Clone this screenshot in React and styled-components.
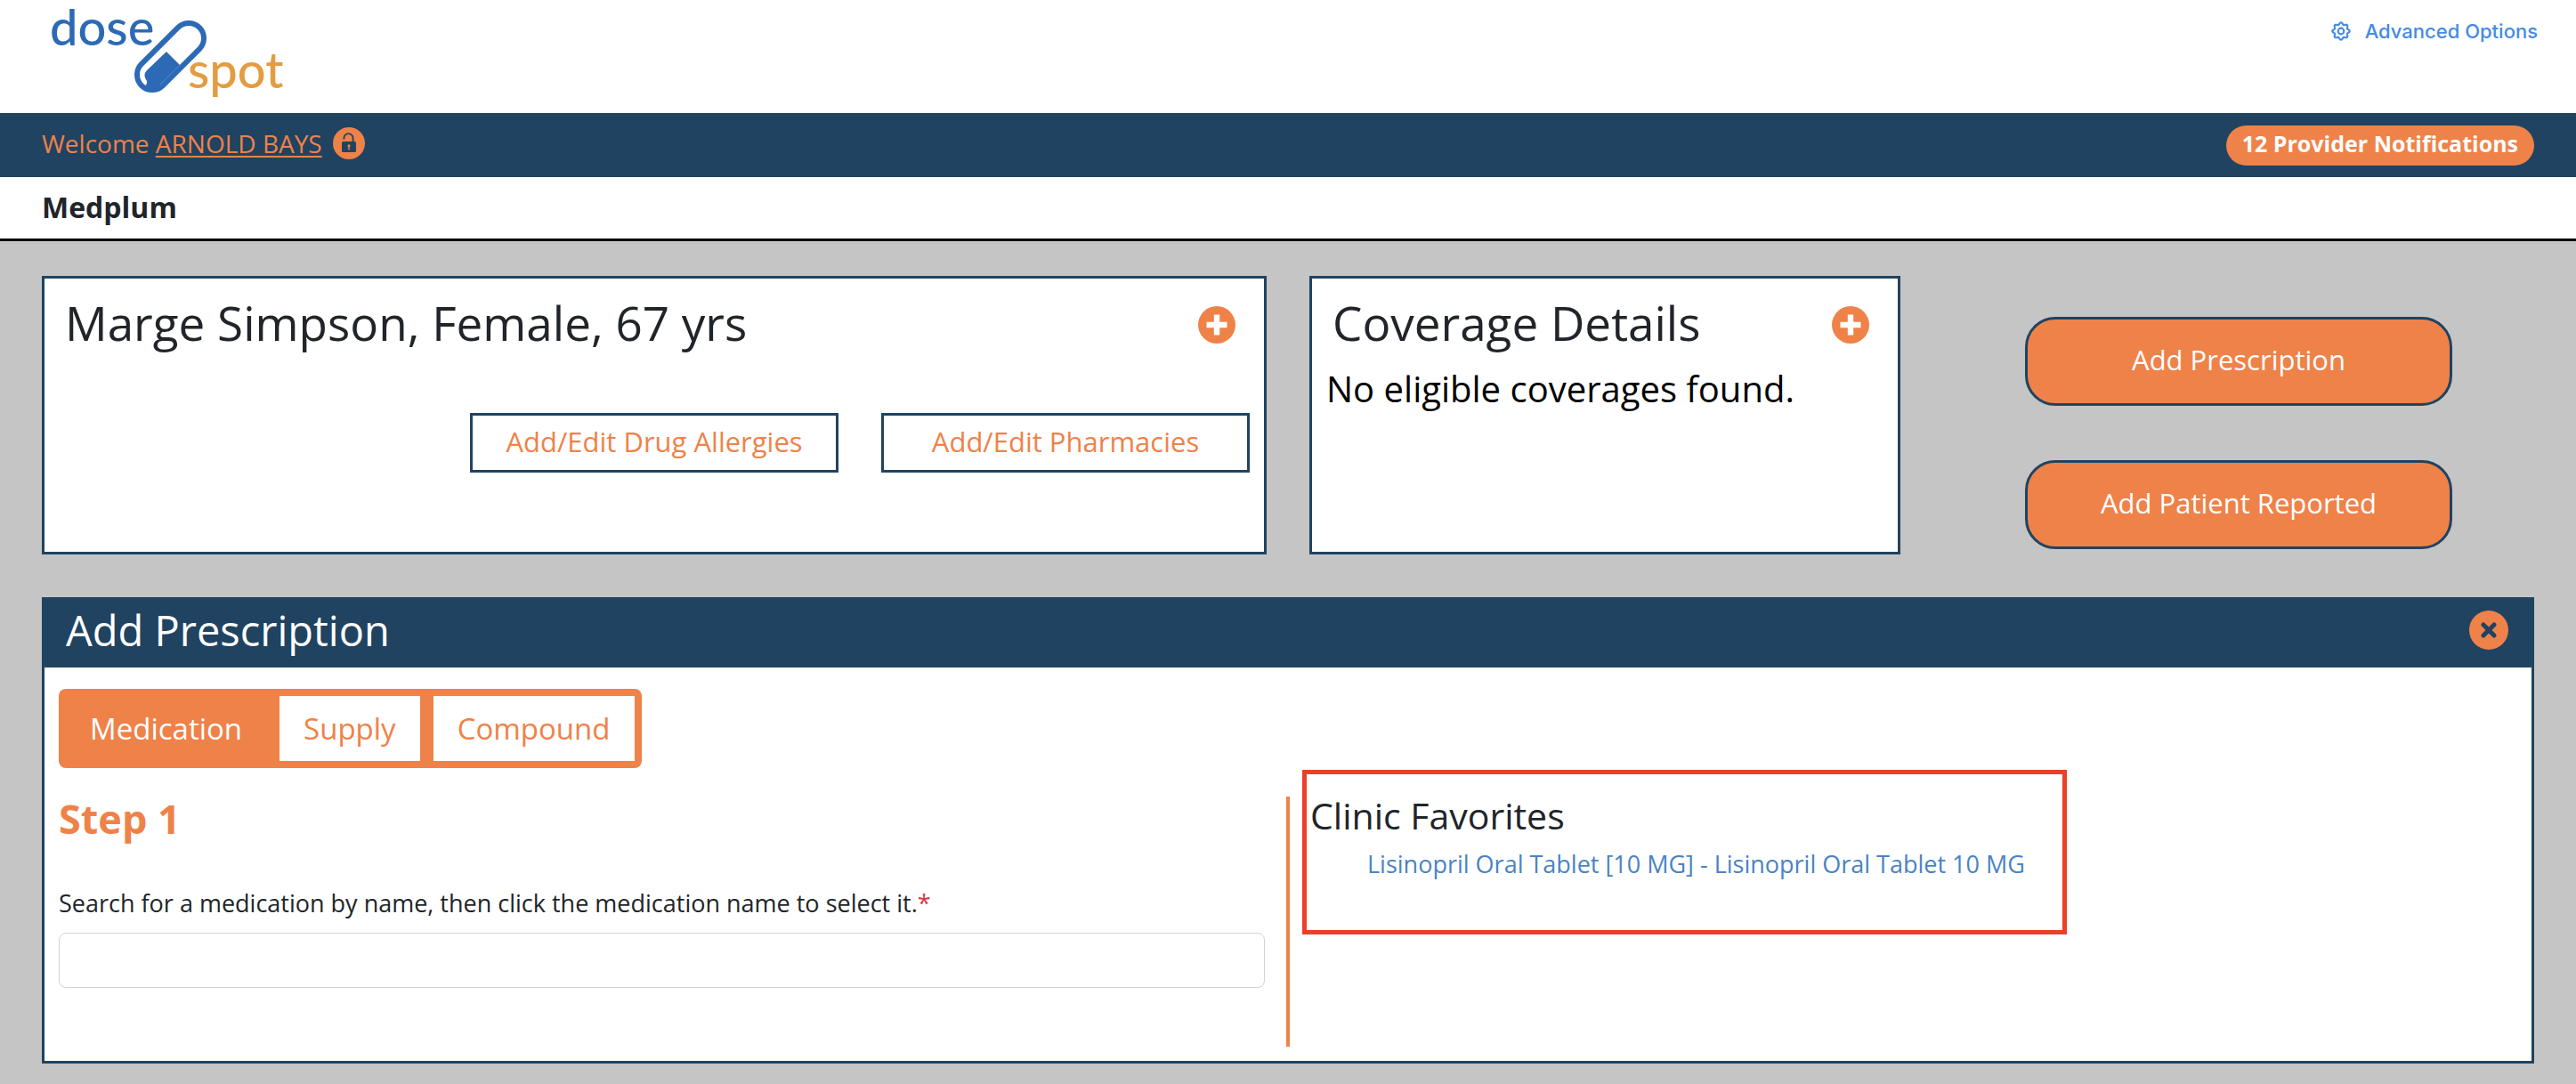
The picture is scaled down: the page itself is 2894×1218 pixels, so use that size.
import React from 'react';
import styled, { createGlobalStyle } from 'styled-components';

const navy = '#204361';
const orange = '#ef8249';
const ink = '#212529';

const GlobalStyle = createGlobalStyle`
  *, *::before, *::after { box-sizing: border-box; }
  html { background: #c5c5c5; }
  body { margin: 0; font-family: 'Open Sans', 'Noto Sans', sans-serif; color: ${ink}; }
  h1, h2, h3, p, ul { margin: 0; padding: 0; font-weight: 400; }
  button, input { font: inherit; }
  button { cursor: pointer; }
`;

const Masthead = styled.header`
  display: flex;
  justify-content: space-between;
  align-items: flex-start;
  height: 127px;
  padding: 0 43px 0 48px;
  background: #fff;
`;

const Logo = styled.svg`
  display: block;
  width: 280px;
  height: 120px;
  overflow: visible;
  font-family: Lato, 'Open Sans', sans-serif;
  font-size: 56px;
  font-weight: 500;
`;

const AdvancedLink = styled.a`
  display: flex;
  align-items: center;
  gap: 16px;
  padding-top: 19px;
  color: #468be3;
  font-family: Inter, sans-serif;
  font-size: 22px;
  line-height: 32px;
  font-weight: 500;
  text-decoration: none;
  svg { width: 22px; height: 22px; }
`;

const UserBar = styled.div`
  display: flex;
  justify-content: space-between;
  align-items: center;
  height: 72px;
  padding: 0 47px;
  background: ${navy};
  color: ${orange};
  font-size: 28px;
  line-height: 40px;
`;

const Greeting = styled.div`
  display: flex;
  align-items: center;
  gap: 12px;
  padding-bottom: 4px;
  a { color: inherit; text-underline-offset: 3px; text-decoration-thickness: 2px; }
`;

const IconButton = styled.button`
  display: flex;
  padding: 0;
  border: 0;
  background: none;
  svg { display: block; width: ${(p) => p.$size}px; height: ${(p) => p.$size}px; }
`;

const NotificationPill = styled.button`
  height: 45px;
  padding: 0 18px 4px;
  border: 0;
  border-radius: 23px;
  background: ${orange};
  color: #fff;
  font-size: 25px;
  font-weight: 700;
  line-height: 40px;
`;

const ClinicName = styled.h1`
  height: 72px;
  padding: 12px 47px 0;
  border-bottom: 3px solid #000;
  background: #fff;
  font-size: 32px;
  font-weight: 700;
  line-height: 44px;
`;

const Main = styled.main`
  display: grid;
  gap: 48px;
  padding: 39px 47px 23px;
`;

const Summary = styled.div`
  display: grid;
  grid-template-columns: 1376fr 664fr 664fr;
  gap: 48px;
`;

const Card = styled.section`
  min-height: 313px;
  border: 3px solid ${navy};
  background: #fff;
`;

const CardHead = styled.div`
  display: flex;
  justify-content: space-between;
  align-items: center;
  padding: 16px 32px 0 23px;
  h2 { padding-bottom: 4px; font-size: 53px; line-height: 68px; }
`;

const CardText = styled.p`
  padding: 12px 16px;
  color: #000;
  font-size: 40px;
  line-height: 48px;
`;

const CardActions = styled.div`
  display: flex;
  justify-content: flex-end;
  gap: 48px;
  padding: 63px 16px 0;
`;

const OutlineButton = styled.button`
  width: 414px;
  height: 67px;
  padding: 0 0 4px;
  border: 3px solid ${navy};
  background: #fff;
  color: ${orange};
  font-size: 31px;
`;

const ActionColumn = styled.div`
  display: flex;
  flex-direction: column;
  align-items: center;
  gap: 61px;
  padding-top: 46px;
`;

const ActionButton = styled.button`
  width: 480px;
  height: 100px;
  padding: 0 0 4px;
  border: 3px solid ${navy};
  border-radius: 34px;
  background: ${orange};
  color: #fff;
  font-size: 31px;
`;

const Panel = styled.section`
  border: 3px solid ${navy};
  background: #fff;
`;

const PanelHead = styled.div`
  display: flex;
  justify-content: space-between;
  align-items: center;
  height: 76px;
  padding: 0 26px 9px 24px;
  background: ${navy};
  color: #fff;
  h2 { font-size: 47px; line-height: 64px; }
`;

const PanelBody = styled.div`
  padding: 24px 16px 16px;
`;

const Tabs = styled.div`
  display: inline-flex;
  gap: 15px;
  padding: 8px;
  border-radius: 8px;
  background: ${orange};
`;

const Tab = styled.button`
  height: 73px;
  padding: 0 27px;
  border: 0;
  background: ${(p) => (p.$active ? orange : '#fff')};
  color: ${(p) => (p.$active ? '#fff' : orange)};
  font-size: 33px;
`;

const Columns = styled.div`
  display: grid;
  grid-template-columns: 1383fr 1379fr;
  padding-top: 32px;
`;

const SearchColumn = styled.div`
  display: flex;
  flex-direction: column;
  min-height: 281px;
  padding-right: 24px;
  border-right: 4px solid ${orange};
  h3 { color: ${orange}; font-size: 45px; font-weight: 700; line-height: 50px; }
  label { padding-top: 50px; font-size: 27px; line-height: 40px; }
  label span { color: #dc3545; }
  input {
    height: 62px;
    margin-top: 13px;
    padding: 0 16px;
    border: 1px solid #ced4da;
    border-radius: 8px;
    background: #fff;
    font-size: 27px;
  }
`;

const Favorites = styled.section`
  justify-self: start;
  width: 859px;
  height: 185px;
  margin: -30px 0 0 14px;
  padding: 20px 4px;
  border: 5px solid #eb4026;
  h3 { font-size: 41px; line-height: 52px; }
  ul { padding: 11px 0 0 64px; list-style: none; }
  a { color: #4a83c4; font-size: 27px; line-height: 36px; text-decoration: none; }
`;

const LogoMark = () => (
  <Logo viewBox="48 0 280 120" role="img" aria-label="dose spot">
    <text x="56" y="51" fill="#2d6ab6">dose</text>
    <text x="211" y="99" fill="#e39c41">spot</text>
    <rect x="145.5" y="46.5" width="92" height="34" rx="17" transform="rotate(-45 191.5 63.5)" fill="none" stroke="#2d6ab6" strokeWidth="6" />
    <path d="M187 58 L202 73 L181 94 Q171 104 160 98 Q166 96 165 91 Q160 84 165 79 Z" fill="#2d6ab6" />
  </Logo>
);

const gearOutline = Array.from({ length: 96 }, (_, i) => {
  const angle = (i / 96) * Math.PI * 2;
  const radius = 9.4 + 1.2 * Math.cos(angle * 8);
  return `${(12 + radius * Math.cos(angle)).toFixed(2)} ${(12 + radius * Math.sin(angle)).toFixed(2)}`;
}).join('L');

const GearIcon = () => (
  <svg viewBox="0 0 24 24" fill="none" stroke="currentColor" strokeWidth="2.4" strokeLinejoin="round" aria-hidden="true">
    <path d={`M${gearOutline}Z`} />
    <circle cx="12" cy="12" r="3.6" />
  </svg>
);

const LockIcon = () => (
  <svg viewBox="0 0 36 36" aria-hidden="true">
    <circle cx="18" cy="18" r="18" fill={orange} />
    <path d="M12.4 13.6v-1.4a5.1 5.1 0 0 1 10.2 0V17" fill="none" stroke={navy} strokeWidth="1.9" />
    <rect x="10" y="16" width="16" height="12" rx="1.6" fill={navy} />
    <circle cx="18" cy="20.8" r="1.6" fill={orange} />
    <path d="M17.3 21h1.4v4.5h-1.4z" fill={orange} />
  </svg>
);

const PlusIcon = () => (
  <svg viewBox="0 0 42 42" aria-hidden="true">
    <circle cx="21" cy="21" r="21" fill={orange} />
    <path d="M21 9.5v23M9.5 21h23" stroke="#fff" strokeWidth="6.4" />
  </svg>
);

const CloseIcon = () => (
  <svg viewBox="0 0 44 44" aria-hidden="true">
    <circle cx="22" cy="22" r="22" fill={orange} />
    <path d="M16 16l12 12M28 16L16 28" stroke={navy} strokeWidth="5" strokeLinecap="round" />
  </svg>
);

export default function App() {
  return (
    <>
      <GlobalStyle />
      <Masthead>
        <LogoMark />
        <AdvancedLink href="#advanced"><GearIcon />Advanced Options</AdvancedLink>
      </Masthead>
      <UserBar>
        <Greeting>
          <span>Welcome <a href="#profile">ARNOLD BAYS</a></span>
          <IconButton $size={36} aria-label="Unlock account"><LockIcon /></IconButton>
        </Greeting>
        <NotificationPill>12 Provider Notifications</NotificationPill>
      </UserBar>
      <ClinicName>Medplum</ClinicName>
      <Main>
        <Summary>
          <Card>
            <CardHead>
              <h2>Marge Simpson, Female, 67 yrs</h2>
              <IconButton $size={42} aria-label="Show patient details"><PlusIcon /></IconButton>
            </CardHead>
            <CardActions>
              <OutlineButton>Add/Edit Drug Allergies</OutlineButton>
              <OutlineButton>Add/Edit Pharmacies</OutlineButton>
            </CardActions>
          </Card>
          <Card>
            <CardHead>
              <h2>Coverage Details</h2>
              <IconButton $size={42} aria-label="Show coverage details"><PlusIcon /></IconButton>
            </CardHead>
            <CardText>No eligible coverages found.</CardText>
          </Card>
          <ActionColumn>
            <ActionButton>Add Prescription</ActionButton>
            <ActionButton>Add Patient Reported</ActionButton>
          </ActionColumn>
        </Summary>
        <Panel>
          <PanelHead>
            <h2>Add Prescription</h2>
            <IconButton $size={44} aria-label="Close"><CloseIcon /></IconButton>
          </PanelHead>
          <PanelBody>
            <Tabs role="tablist">
              <Tab role="tab" aria-selected="true" $active>Medication</Tab>
              <Tab role="tab" aria-selected="false">Supply</Tab>
              <Tab role="tab" aria-selected="false">Compound</Tab>
            </Tabs>
            <Columns>
              <SearchColumn>
                <h3>Step 1</h3>
                <label htmlFor="medication">Search for a medication by name, then click the medication name to select it.<span>*</span></label>
                <input id="medication" type="text" />
              </SearchColumn>
              <Favorites>
                <h3>Clinic Favorites</h3>
                <ul>
                  <li><a href="#lisinopril">Lisinopril Oral Tablet [10 MG] - Lisinopril Oral Tablet 10 MG</a></li>
                </ul>
              </Favorites>
            </Columns>
          </PanelBody>
        </Panel>
      </Main>
    </>
  );
}
